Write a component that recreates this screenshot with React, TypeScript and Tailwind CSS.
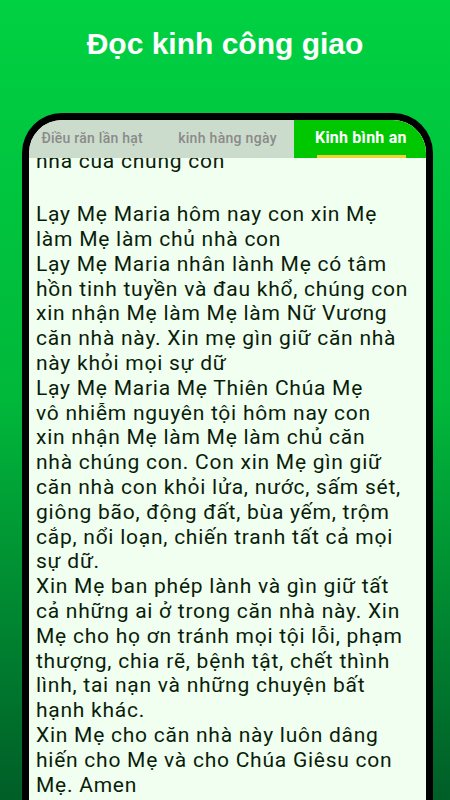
import React from "react";

const lines = [
  "Lạy Mẹ Maria hôm nay con xin Mẹ",
  "làm Mẹ làm chủ nhà con",
  "Lạy Mẹ Maria nhân lành Mẹ có tâm",
  "hồn tinh tuyền và đau khổ, chúng con",
  "xin nhận Mẹ làm Mẹ làm Nữ Vương",
  "căn nhà này. Xin mẹ gìn giữ căn nhà",
  "này khỏi mọi sự dữ",
  "Lạy Mẹ Maria Mẹ Thiên Chúa Mẹ",
  "vô nhiễm nguyên tội hôm nay con",
  "xin nhận Mẹ làm Mẹ làm chủ căn",
  "nhà chúng con. Con xin Mẹ gìn giữ",
  "căn nhà con khỏi lửa, nước, sấm sét,",
  "giông bão, động đất, bùa yếm, trộm",
  "cắp, nổi loạn, chiến tranh tất cả mọi",
  "sự dữ.",
  "Xin Mẹ ban phép lành và gìn giữ tất",
  "cả những ai ở trong căn nhà này. Xin",
  "Mẹ cho họ ơn tránh mọi tội lỗi, phạm",
  "thượng, chia rẽ, bệnh tật, chết thình",
  "lình, tai nạn và những chuyện bất",
  "hạnh khác.",
  "Xin Mẹ cho căn nhà này luôn dâng",
  "hiến cho Mẹ và cho Chúa Giêsu con",
  "Mẹ. Amen",
];

const body = { fontFamily: 'Roboto, "Noto Sans", sans-serif' };

export default function App() {
  return (
    <div className="w-[450px] h-[800px] overflow-hidden bg-gradient-to-b from-[#00d142] via-[#00b83a] to-[#005e27] flex flex-col">
      <h1
        className="mt-[27px] text-center text-[30px] leading-[34px] font-bold text-white"
        style={{ fontFamily: '"Liberation Sans", Arial, sans-serif' }}
      >
        Đọc kinh công giao
      </h1>
      <div className="mt-[52px] ml-[22px] w-[411px] h-[720px] shrink-0 rounded-t-[40px] border-[7px] border-b-0 border-black bg-[#f0fff0] overflow-hidden flex flex-col">
        <div className="h-[38px] shrink-0 grid grid-cols-3 bg-[#ccdccc]" style={body}>
          <div className="flex items-center justify-center text-[#8a8a8a] font-medium text-[14px] tracking-[0.25px] pr-[6px] pb-[2px]">
            Điều răn lần hạt
          </div>
          <div className="flex items-center justify-center text-[#8a8a8a] font-medium text-[14px] tracking-[0.3px] pb-[2px]">
            kinh hàng ngày
          </div>
          <div className="relative flex items-center justify-center bg-[#00c800] text-white font-bold text-[16px] tracking-[0.2px] pl-[2px] pb-[3px]">
            Kinh bình an
            <div className="absolute bottom-0 left-[23px] right-[20px] h-[3px] bg-[#f2d22e]" />
          </div>
        </div>
        <div className="flex-1 overflow-hidden pl-[7px]">
          <div className="text-[21px] leading-[24.8px] tracking-[0.75px] text-[#0a1d0a]" style={body}>
            <div className="mt-[-9px] whitespace-nowrap">nhà của chúng con</div>
            <div className="h-[28.5px]" />
            {lines.map((l, i) => (
              <div key={i} className="whitespace-nowrap">
                {l}
              </div>
            ))}
          </div>
        </div>
      </div>
    </div>
  );
}
